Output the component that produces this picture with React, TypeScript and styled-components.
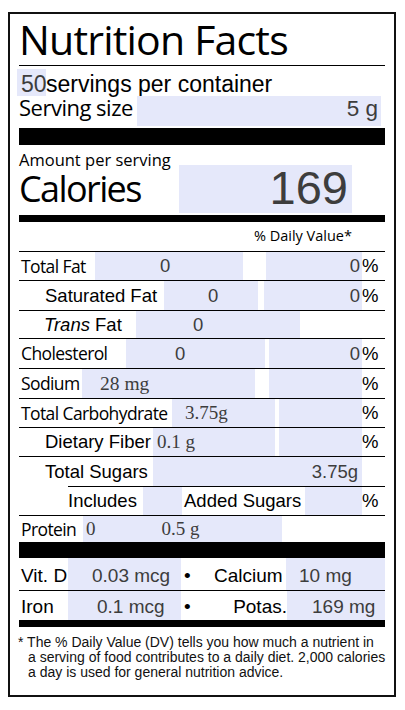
import React from "react";
import styled, { createGlobalStyle, css } from "styled-components";

type Font = "myriad" | "arial";

const GlobalStyle = createGlobalStyle`
  html, body { margin: 0; padding: 0; background: #ffffff; }
  body { font-family: "Liberation Sans", Arial, sans-serif; color: #000; }
`;

const myriad = css`
  font-family: "Open Sans", "Noto Sans", sans-serif;
  font-weight: 400;
`;
const arial = css`
  font-family: "Liberation Sans", Arial, sans-serif;
`;
const times = css`
  font-family: "Liberation Serif", "Times New Roman", serif;
`;

const Page = styled.div`
  padding: 12px 0 0 8px;
`;

const LabelBox = styled.div`
  box-sizing: border-box;
  width: 388px;
  height: 685px;
  border: 2px solid #111;
  padding: 0 9px;
  display: flex;
  flex-direction: column;
  color: #000;
`;

const Title = styled.h1`
  ${myriad}
  margin: 0;
  height: 51px;
  font-size: 41px;
  letter-spacing: -0.8px;
  line-height: 51px;
  border-bottom: 1px solid #000;
  white-space: nowrap;
`;

const ServingsRow = styled.div`
  display: flex;
  height: 27px;
  padding-top: 3px;
`;

const ServingsText = styled.div`
  ${arial}
  padding-top: 3px;
  font-size: 23px;
  line-height: 24px;
  white-space: nowrap;
`;

const ServingSizeRow = styled.div`
  display: flex;
  height: 30px;
`;

const ServingSizeLabel = styled.div`
  ${myriad}
  flex: none;
  width: 118px;
  font-size: 22px;
  letter-spacing: -0.5px;
  line-height: 23px;
  white-space: nowrap;
`;

const Field = styled.div<{
  $w: number;
  $ml?: number;
  $pl?: number;
  $pr?: number;
  $pt?: number;
  $align?: "left" | "right";
  $serif?: boolean;
  $size?: number;
  $lh?: number;
}>`
  ${(p) => (p.$serif ? times : arial)}
  flex: none;
  box-sizing: border-box;
  width: ${(p) => p.$w}px;
  margin-left: ${(p) => p.$ml ?? 0}px;
  padding: ${(p) => p.$pt ?? 0}px ${(p) => p.$pr ?? 0}px 0 ${(p) => p.$pl ?? 0}px;
  background: #e5e8fa;
  color: #3d3d3d;
  text-align: ${(p) => p.$align ?? "left"};
  white-space: nowrap;
  font-size: ${(p) => p.$size ?? (p.$serif ? 19 : 18.5)}px;
  ${(p) => (p.$lh ? `line-height: ${p.$lh}px;` : "")}
`;

const Bar = styled.div<{ $h: number; $mt?: number }>`
  flex: none;
  height: ${(p) => p.$h}px;
  margin-top: ${(p) => p.$mt ?? 0}px;
  background: #000;
`;

const CalBlock = styled.div`
  display: flex;
  height: 68px;
`;

const CalLeft = styled.div`
  flex: none;
  width: 160px;
  padding-top: 5px;
`;

const Amount = styled.div`
  ${myriad}
  font-size: 16.5px;
  line-height: 20px;
  white-space: nowrap;
`;

const Calories = styled.div`
  ${myriad}
  font-size: 36px;
  letter-spacing: -1.6px;
  line-height: 38px;
  white-space: nowrap;
`;

const CalField = styled.div`
  ${arial}
  flex: none;
  box-sizing: border-box;
  width: 173px;
  height: 48px;
  margin-top: 20px;
  padding-right: 4px;
  background: #e5e8fa;
  color: #3d3d3d;
  text-align: right;
  font-size: 47px;
  line-height: 45px;
`;

const DVHeader = styled.div`
  ${myriad}
  height: 29px;
  padding-right: 33px;
  text-align: right;
  font-size: 14.5px;
  line-height: 28px;
  white-space: nowrap;
`;

const Row = styled.div<{ $h: number; $from?: number; $noLine?: boolean; $lift?: number }>`
  display: flex;
  box-sizing: border-box;
  height: ${(p) => p.$h}px;
  margin-left: ${(p) => p.$from ?? 0}px;
  border-top: ${(p) => (p.$noLine ? "none" : "1px solid #000")};
  line-height: ${(p) => p.$h - (p.$noLine ? 0 : 1) + (p.$lift ?? 0)}px;
`;

const RowLabel = styled.div<{ $w: number; $indent?: number; $font?: Font; $right?: boolean; $size?: number }>`
  ${(p) => (p.$font === "arial" ? arial : myriad)}
  flex: none;
  box-sizing: border-box;
  width: ${(p) => p.$w}px;
  padding-left: ${(p) => p.$indent ?? 0}px;
  text-align: ${(p) => (p.$right ? "right" : "left")};
  font-size: ${(p) => p.$size ?? (p.$font === "arial" ? 18.5 : 17.5)}px;
  letter-spacing: ${(p) => (p.$font === "arial" ? 0 : -0.6)}px;
  white-space: nowrap;
`;

const Pct = styled.div`
  ${arial}
  flex: none;
  width: 23px;
  font-size: 18.5px;
`;

const Value = styled.span<{ $ml?: number }>`
  margin-left: ${(p) => p.$ml ?? 0}px;
`;

const Bullet = styled.div<{ $pl: number }>`
  ${arial}
  flex: none;
  box-sizing: border-box;
  width: 33px;
  padding-left: ${(p) => p.$pl}px;
  font-size: 19px;
`;

const Footnote = styled.p`
  ${arial}
  margin: 8px 0 0 -1px;
  padding-left: 10px;
  text-indent: -10px;
  font-size: 14px;
  line-height: 15px;
  color: #111;
  white-space: nowrap;
`;

export default function App() {
  return (
    <>
      <GlobalStyle />
      <Page>
        <LabelBox>
          <Title>Nutrition Facts</Title>
          <ServingsRow>
            <Field $w={29} $ml={-2} $pl={4} $pt={3} $size={23} $lh={24}>
              50
            </Field>
            <ServingsText>servings per container</ServingsText>
          </ServingsRow>
          <ServingSizeRow>
            <ServingSizeLabel>Serving size</ServingSizeLabel>
            <Field $w={244} $align="right" $pr={3} $size={22.5} $lh={26}>
              5 g
            </Field>
          </ServingSizeRow>
          <Bar $h={17} $mt={2} />
          <CalBlock>
            <CalLeft>
              <Amount>Amount per serving</Amount>
              <Calories>Calories</Calories>
            </CalLeft>
            <CalField>169</CalField>
          </CalBlock>
          <Bar $h={7} $mt={2} />
          <DVHeader>% Daily Value*</DVHeader>

          <Row $h={29}>
            <RowLabel $w={76} $indent={2}>Total Fat</RowLabel>
            <Field $w={148} $pl={65}>0</Field>
            <Field $w={96} $ml={23} $align="right" $pr={2}>0</Field>
            <Pct>%</Pct>
          </Row>
          <Row $h={30}>
            <RowLabel $w={145} $indent={26} $font="arial">Saturated Fat</RowLabel>
            <Field $w={94} $pl={44}>0</Field>
            <Field $w={98} $ml={6} $align="right" $pr={2}>0</Field>
            <Pct>%</Pct>
          </Row>
          <Row $h={28}>
            <RowLabel $w={117} $indent={25} $font="arial">
              <i>Trans</i> Fat
            </RowLabel>
            <Field $w={164} $pl={57}>0</Field>
          </Row>
          <Row $h={30}>
            <RowLabel $w={107} $indent={2}>Cholesterol</RowLabel>
            <Field $w={139} $pl={49}>0</Field>
            <Field $w={93} $ml={4} $align="right" $pr={2}>0</Field>
            <Pct>%</Pct>
          </Row>
          <Row $h={30}>
            <RowLabel $w={63} $indent={2}>Sodium</RowLabel>
            <Field $w={173} $pl={18} $serif $size={19.5}>28 mg</Field>
            <Field $w={93} $ml={14} />
            <Pct>%</Pct>
          </Row>
          <Row $h={29}>
            <RowLabel $w={153} $indent={2}>Total Carbohydrate</RowLabel>
            <Field $w={103} $pl={13} $serif>3.75g</Field>
            <Field $w={83} $ml={4} />
            <Pct>%</Pct>
          </Row>
          <Row $h={29}>
            <RowLabel $w={134} $indent={26} $font="arial">Dietary Fiber</RowLabel>
            <Field $w={122} $pl={4} $serif>0.1 g</Field>
            <Field $w={83} $ml={4} />
            <Pct>%</Pct>
          </Row>
          <Row $h={30}>
            <RowLabel $w={134} $indent={26} $font="arial">Total Sugars</RowLabel>
            <Field $w={209} $align="right" $pr={4}>3.75g</Field>
          </Row>
          <Row $h={29} $from={49}>
            <RowLabel $w={75} $font="arial">Includes</RowLabel>
            <Field $w={39} />
            <RowLabel $w={123} $indent={2} $font="arial">Added Sugars</RowLabel>
            <Field $w={57} />
            <Pct>%</Pct>
          </Row>
          <Row $h={27}>
            <RowLabel $w={64} $indent={2}>Protein</RowLabel>
            <Field $w={199} $pl={3} $serif>
              0<Value $ml={66}>0.5 g</Value>
            </Field>
          </Row>
          <Bar $h={16} />
          <Row $h={32} $noLine $lift={4}>
            <RowLabel $w={49} $indent={2} $font="arial" $size={19}>Vit. D</RowLabel>
            <Field $w={113} $pl={24} $size={19}>0.03 mcg</Field>
            <Bullet $pl={3}>•</Bullet>
            <RowLabel $w={72} $font="arial" $size={19}>Calcium</RowLabel>
            <Field $w={99} $pl={13} $size={19}>10 mg</Field>
          </Row>
          <Row $h={30} $lift={3}>
            <RowLabel $w={49} $indent={2} $font="arial" $size={19}>Iron</RowLabel>
            <Field $w={113} $pl={29} $size={19}>0.1 mcg</Field>
            <Bullet $pl={3}>•</Bullet>
            <RowLabel $w={73} $right $font="arial" $size={19}>Potas.</RowLabel>
            <Field $w={98} $pl={25} $size={19}>169 mg</Field>
          </Row>
          <Bar $h={7} />
          <Footnote>
            * The % Daily Value (DV) tells you how much a nutrient in
            <br />
            a serving of food contributes to a daily diet. 2,000 calories
            <br />
            a day is used for general nutrition advice.
          </Footnote>
        </LabelBox>
      </Page>
    </>
  );
}
